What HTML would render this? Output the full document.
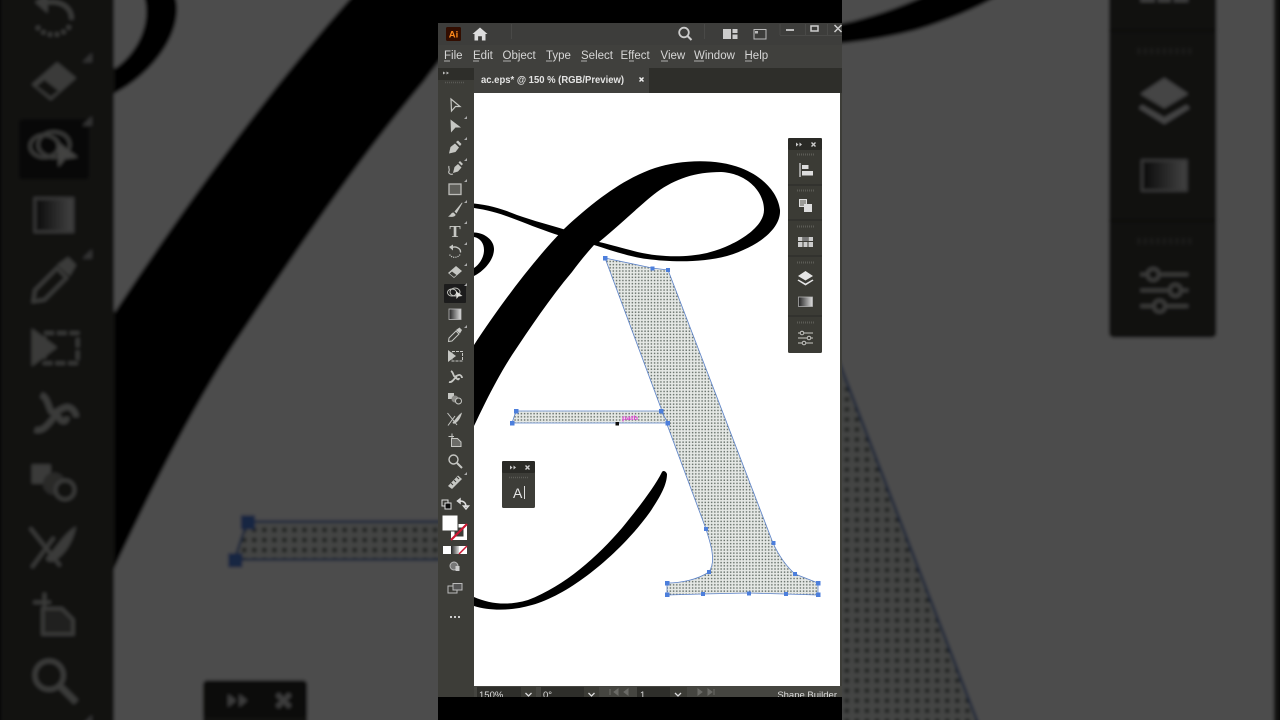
<!DOCTYPE html>
<html lang="en"><head><meta charset="utf-8"><title>Illustrator Shape Builder</title>
<style>html,body{margin:0;padding:0;background:#000;width:1280px;height:720px;overflow:hidden}svg{display:block}text{font-family:"Liberation Sans",sans-serif}</style>
</head><body>
<svg xmlns="http://www.w3.org/2000/svg" width="1280" height="720" viewBox="0 0 1280 720" style="overflow:hidden">
<defs>
<pattern id="ht" x="0" y="0" width="3.17" height="3.17" patternUnits="userSpaceOnUse">
<rect width="3.17" height="3.17" fill="#e6e9e6"/><rect x=".8" y=".8" width="1.5" height="1.5" fill="#6d7670"/>
</pattern>
<linearGradient id="g1"><stop offset="0" stop-color="#222"/><stop offset="1" stop-color="#ddd"/></linearGradient>
<filter id="bl" x="-5%" y="-5%" width="110%" height="110%"><feGaussianBlur stdDeviation="1.5"/></filter>
<filter id="sf" x="0" y="0" width="100%" height="100%"><feGaussianBlur stdDeviation=".35"/></filter>
<clipPath id="frameclip"><rect x="438" y="0" width="404" height="720"/></clipPath>
<clipPath id="pageclip"><rect x="0" y="0" width="1280" height="720"/></clipPath>
<g id="app">
<rect x="438" y="0" width="404" height="720" fill="#000"/>
<!-- chrome -->
<rect x="438" y="23" width="404" height="22" fill="#3e3e3a"/>
<rect x="438" y="45" width="404" height="23" fill="#41413d"/>
<rect x="438" y="68" width="404" height="25" fill="#2d2d29"/>
<rect x="438" y="80" width="36" height="620" fill="#3c3c38"/>
<rect x="438" y="68" width="35" height="12" fill="#2d2d29"/>
<rect x="474" y="68" width="175" height="25" fill="#40403c"/>
<rect x="474" y="93" width="366" height="593" fill="#fff"/>
<rect x="840" y="93" width="2" height="607" fill="#3c3c38"/>
<rect x="474" y="686" width="368" height="14" fill="#45453f"/>
<!-- title bar -->
<rect x="446" y="27" width="15" height="14" rx="1.5" fill="#330a00"/>
<text x="453.5" y="37.5" font-size="9.5" font-weight="700" text-anchor="middle" fill="#ff8a1a">Ai</text>
<path d="M480 27.5l7.5 6.5h-2v6.5h-3.6v-4.2h-3.8v4.2h-3.6V34h-2z" fill="#ddd"/>
<circle cx="684" cy="32.5" r="4.8" fill="none" stroke="#ccc" stroke-width="1.8"/><path d="M687.5 36l4 4" stroke="#ccc" stroke-width="2"/>
<path d="M723 29h8v10h-8zM732.5 29h5v4h-5zM732.5 34.500h5V39h-5z" fill="#ccc"/>
<rect x="754" y="29.500" width="12" height="9.500" fill="none" stroke="#bbb"/><rect x="755" y="31" width="3" height="2.500" fill="#bbb"/>
<rect x="786" y="29" width="8" height="2" fill="#bbb"/>
<rect x="811" y="26" width="7" height="5" fill="none" stroke="#ccc" stroke-width="1.500"/>
<path d="M834.500 25l7 7M841.500 25l-7 7" stroke="#ccc" stroke-width="1.500"/>
<path d="M511.500 24v15M704.500 24v15M780 35.500h62M780 24v11M805.500 24v11M827.500 24v11" stroke="#4a4a46" stroke-width="1"/>
<!-- menu -->
<g font-size="11.500" fill="#d6d6d6">
<text x="444" y="59">File</text><text x="473" y="59">Edit</text><text x="502.500" y="59">Object</text><text x="546" y="59">Type</text><text x="581" y="59">Select</text><text x="620.500" y="59">Effect</text><text x="660.500" y="59">View</text><text x="694" y="59">Window</text><text x="744.500" y="59">Help</text>
</g>
<path d="M444 61h6M473 61h6M503 61h8M546 61h6M581 61h6M629 61h5M661 61h7M694 61h10M745 61h7" stroke="#d6d6d6" stroke-width=".8"/>
<!-- tab -->
<text x="481" y="83" font-size="10.500" font-weight="700" fill="#e4e4e4" textLength="143" lengthAdjust="spacingAndGlyphs">ac.eps* @ 150 % (RGB/Preview)</text>
<path d="M639.500 77.500l4 4M643.500 77.500l-4 4" stroke="#eee" stroke-width="1.500"/>
<path d="M443 71.500l2.500 1.500-2.500 1.500zM446.500 71.500l2.500 1.500-2.500 1.500z" fill="#bbb"/>
<path d="M445 82.500h20" stroke="#5a5a55" stroke-width="1.500" stroke-dasharray="1 1"/>
<!-- artwork -->
<g fill="#000">
<path d="M474 345C497 310 530 264 564 229C595 200 625 178 655 168C680 160 715 158 741 168C762 176 778 192 780 210C781 228 760 246 727 256C700 263 670 262 647 259C630 257 610 250 594 245C585 255 578 264 572 272C550 298 530 328 512 355C497 378 484 405 474 426Z"/>
<path d="M599 242C620 225 640 205 657 192C675 179 695 172 721 172C745 173 764 190 764 210C764 228 735 246 707 253C680 259 650 256 630 250C618 247 608 244 599 242Z" fill="#fff"/>
<path d="M474 203.500C490 205 505 210 517 215C534 221 550 225 566 230L561 236C545 231 530 225 517 220C502 214 488 210 474 208Z"/>
<path d="M474 232.500C486 233 494 241 494 249C494 260 484 271 474 276V268C480 264 484 257 484 250C484 243 480 238 474 237Z"/>
<path d="M474 606C490 611 512 611 532 605C572 594 622 551 650 512C660 497 667 485 667 474C666 471 663 470 662 472C655 486 640 506 622 528C598 556 565 586 528 600C508 606 490 604 474 597Z"/>
</g>
<!-- selected A -->
<g fill="url(#ht)" stroke="#5b82c8" stroke-width=".8" stroke-linejoin="round">
<path d="M605 258L652 268L668 270L773 543C779 556 786 566 795 574L818 583V595L785 594L748 593L703 594L667 595V583C680 583 697 580 709 572C713 566 713 558 712 552C711 544 708 536 706 529Z"/>
<path d="M516 411H661L668 423H512Z"/>
</g>
<g fill="#4d7fdc">
<rect x="603" y="256" width="4.500" height="4.500"/><rect x="650.500" y="266.500" width="4" height="4"/><rect x="666" y="268" width="4" height="4"/><rect x="704" y="527" width="4" height="4"/><rect x="771.500" y="541" width="4" height="4"/><rect x="793" y="572" width="4" height="4"/><rect x="816" y="581" width="4.500" height="4.500"/><rect x="816" y="592.500" width="4.500" height="4.500"/><rect x="784" y="592" width="4" height="4"/><rect x="747" y="591.500" width="4" height="4"/><rect x="701" y="592" width="4" height="4"/><rect x="665" y="592.500" width="4.500" height="4.500"/><rect x="665" y="581" width="4.500" height="4.500"/><rect x="707" y="570" width="4" height="4"/>
<rect x="514" y="409" width="4.500" height="4.500"/><rect x="659" y="409" width="4.500" height="4.500"/><rect x="665.500" y="421" width="4.500" height="4.500"/><rect x="510" y="421" width="4.500" height="4.500"/>
</g>
<text x="622" y="420" font-size="6" font-weight="700" fill="#e23fd6" textLength="16" lengthAdjust="spacingAndGlyphs">path</text>
<rect x="615.500" y="422" width="3.500" height="3.500" fill="#111"/>
<!-- tools -->
<rect x="444" y="284" width="22" height="19" rx="1" fill="#1d1d1a"/>
<g fill="#c6c7c3" stroke="none">
<g transform="translate(455 105)"><path d="M-4 -6L5 1.500L.5 1.500L-3.500 6Z" fill="#3c3c38" stroke="#c6c7c3" stroke-width="1.200"/></g>
<g transform="translate(455 126)"><path d="M-4.500 -6.500L6 1.500L.5 1.500L-4 6.500Z"/></g>
<g transform="translate(455 147)"><path d="M-6 6.500L-4.500 0L0 -3.500L4 .5L.5 5ZM1 -5L3 -6.500L6.500 -3L5 -1Z"/></g>
<g transform="translate(455 168)"><path d="M-2 5L-.5 -1L3 -4L6.500 -.5L3 3.500ZM3.500 -5.500L5 -7L8 -4L6.500 -2.500Z"/><path d="M-2 6C-5 7 -7 5 -6 3C-5 1 -7 0 -6 -2" fill="none" stroke="#c6c7c3" stroke-width="1.100"/></g>
<g transform="translate(455 189)"><rect x="-6" y="-5" width="12" height="10.500" fill="#5e5e5a" stroke="#bdbdb9" stroke-width="1.300"/></g>
<g transform="translate(455 210)"><path d="M7 -7.500L-.5 1.500L1.500 3.500L7.500 -7ZM-1.500 2.500C-4 2.500 -4 5 -7 6.500C-3 7.500 1 6.500 .5 4.500Z"/></g>
<text x="455" y="237" font-size="17" font-weight="700" text-anchor="middle" style="font-family:'Liberation Serif',serif">T</text>
<g transform="translate(455 252)" fill="none" stroke="#c6c7c3"><path d="M-4 -4C0 -6.500 6 -4 5.500 .5" stroke-width="1.300"/><path d="M5 2.500C3 6 -3 6.500 -5.500 2.500" stroke-width="1.200" stroke-dasharray="1.200 1"/><path d="M-6 -5L-2 -7.500L-2 -1.500Z" fill="#c6c7c3" stroke="none"/></g>
<g transform="translate(455 272)"><path d="M-7 1L1 -6L7 -1L-1 6Z"/><path d="M-5.500 1.500L-3 -.5L1.500 3L-1 5Z" fill="#3c3c38"/></g>
<g transform="translate(455 293)" fill="none" stroke="#c6c7c3" stroke-width=".9"><ellipse cx="-3" cy="-.5" rx="4.500" ry="3.500"/><ellipse cx="0" cy="-1" rx="5" ry="4"/><path d="M1 -2L7.500 3L3.500 3.500L1.500 6Z" fill="#dfdfdb" stroke="none"/></g>
<g transform="translate(455 314)"><rect x="-6" y="-5" width="12" height="10.500" fill="url(#g1)" stroke="#bbb" stroke-width=".8"/></g>
<g transform="translate(455 335)"><path d="M-6.500 6.500L-6 3L1 -4L4 -1L-3 6Z" fill="#3c3c38" stroke="#c6c7c3" stroke-width="1"/><path d="M1 -5L4.500 -7.500L7 -5L5 -1.500Z"/></g>
<g transform="translate(455 356)"><path d="M-7 -6L1 0L-7 6Z"/><rect x="-3" y="-4.500" width="10.500" height="9.500" fill="none" stroke="#c6c7c3" stroke-dasharray="3 1"/></g>
<g transform="translate(455 377)" fill="none" stroke="#c6c7c3" stroke-width="1.800"><path d="M-4 -6C-2 -5 -2 -3 -1 -1C0 1 3 -3 5 -2C7 -1 7 1 7 1M-6 5C-3 6 -1 2 1 0C2 3 4 3 4 1"/></g>
<g transform="translate(455 398)"><rect x="-7" y="-5" width="6" height="6"/><circle cx="0" cy="1" r="3.500" fill="#8c8c88"/><circle cx="3.500" cy="3" r="3" fill="#3c3c38" stroke="#c6c7c3" stroke-width="1"/></g>
<g transform="translate(455 419)"><path d="M-7.500 -6L2 6M-7 6.500L0 -3" stroke="#c6c7c3" stroke-width="1" fill="none"/><path d="M7 -6.500C6 -2 4 2 0 4.500C-2 5 -3 4 -2 3C1 0 3 -4 7 -6.500Z"/></g>
<g transform="translate(455 440)"><path d="M-3 -6.500V-2M-6.500 -3.500H-1" stroke="#c6c7c3" fill="none"/><path d="M-3.500 -1.500H2.500L6 2V6.500H-3.500Z" fill="#6c6c68" stroke="#c6c7c3" stroke-width="1"/></g>
<g transform="translate(455 461)"><circle cx="-1.500" cy="-1.500" r="4.500" fill="none" stroke="#c6c7c3" stroke-width="1.400"/><path d="M2 2L7 7" stroke="#c6c7c3" stroke-width="2"/></g>
<g transform="translate(455 482)"><path d="M-7 4L3 -6.500L7 -3L-3 7Z"/><path d="M-4 1L-2 3M-1 -2L1 0M2 -5L4 -3" stroke="#3c3c38"/></g>
<!-- corner markers -->
<path d="M467 116v3h-3zM467 137v3h-3zM467 158v3h-3zM467 179v3h-3zM467 200v3h-3zM467 221v3h-3zM467 242v3h-3zM467 263v3h-3zM467 283v3h-3zM467 325v3h-3zM467 472v3h-3z" fill="#aaa"/>
</g>
<!-- colour controls -->
<rect x="442" y="500" width="6" height="6" fill="#3c3c38" stroke="#ddd"/><rect x="445" y="503" width="6" height="6" fill="#111" stroke="#ddd"/>
<path d="M460 501c4 0 6 2 6 6M466 509l-2.500-3h5zM460 499v4l-2.500-2z" fill="none" stroke="#ddd" stroke-width="1.500"/>
<rect x="451" y="524" width="16" height="16" fill="#fff"/><rect x="454.500" y="527.500" width="9" height="9" fill="#3c3c38"/>
<path d="M451 540L467 524" stroke="#cc1530" stroke-width="2.200"/>
<rect x="442" y="515" width="16" height="16" fill="#fff" stroke="#3c3c38"/>
<rect x="443" y="546" width="8" height="8" fill="#fff"/><rect x="451" y="546" width="8" height="8" fill="url(#g1)"/><rect x="459" y="546" width="8" height="8" fill="#fff"/><path d="M459 554L467 546" stroke="#cc1530" stroke-width="1.500"/>
<circle cx="454" cy="566" r="4" fill="#777" stroke="#bbb"/><rect x="455.500" y="566" width="4" height="5" fill="#ccc"/>
<rect x="448" y="586" width="9" height="7" fill="none" stroke="#bbb"/><rect x="453" y="583.500" width="9" height="6.500" fill="#555" stroke="#bbb"/>
<path d="M450 617h2M454 617h2M458 617h2" stroke="#ccc" stroke-width="2"/>
<!-- right panel -->
<rect x="788" y="138" width="34" height="215" rx="1.500" fill="#3a3a36"/>
<rect x="788" y="138" width="34" height="12" rx="1.500" fill="#2b2b27"/>
<path d="M796 142.500l2.500 2-2.500 2zM799.500 142.500l2.500 2-2.500 2z" fill="#ccc"/>
<path d="M811.500 142.500l4 4M815.500 142.500l-4 4" stroke="#ccc" stroke-width="1.400"/>
<path d="M788 185h34M788 220h34M788 256h34M788 316h34" stroke="#2a2a26"/>
<path d="M797 154.500h17M797 190.500h17M797 226.500h17M797 262.500h17M797 322.500h17" stroke="#5c5c57" stroke-width="2" stroke-dasharray="1 1"/>
<path d="M800 163v14" stroke="#ddd" stroke-width="1.200"/><rect x="802" y="165" width="6.500" height="4" fill="#ddd"/><rect x="802" y="171" width="11" height="4.500" fill="#ddd"/>
<rect x="799.500" y="199.500" width="7" height="7" fill="#9a9a96" stroke="#ddd"/><rect x="804" y="204" width="8" height="8" fill="#ddd"/>
<rect x="798" y="237" width="15" height="10" fill="#ccc"/><path d="M798 241.500h15M803 237v10M808 237v10" stroke="#3a3a36"/><rect x="803" y="237" width="5" height="4" fill="#777"/>
<path d="M805.500 271L813 276L805.500 280.500L798 276ZM798.500 279.500L805.500 283.500L812.500 279.500L813.500 280.500L805.500 285.500L797.500 280.500Z" fill="#e6e6e6"/>
<rect x="798.500" y="297" width="14" height="9.500" fill="url(#g1)" stroke="#bbb" stroke-width=".7"/>
<g fill="none" stroke="#c8c8c4" stroke-width="1"><path d="M798 333h15M798 338h15M798 343h15"/><circle cx="802" cy="333" r="1.800" fill="#3a3a36"/><circle cx="809" cy="338" r="1.800" fill="#3a3a36"/><circle cx="804" cy="343" r="1.800" fill="#3a3a36"/></g>
<!-- character panel -->
<rect x="502" y="461" width="33" height="47" rx="1.500" fill="#3c3c38"/>
<rect x="502" y="461" width="33" height="12" rx="1.500" fill="#2b2b27"/>
<path d="M510 465.500l2.500 2-2.500 2zM513.500 465.500l2.500 2-2.500 2z" fill="#ccc"/>
<path d="M525.500 465.500l4 4M529.500 465.500l-4 4" stroke="#ccc" stroke-width="1.400"/>
<path d="M509 477.500h19" stroke="#5c5c57" stroke-width="1.500" stroke-dasharray="1 1"/>
<text x="513" y="498" font-size="14" fill="#e6e6e6">A</text><path d="M524.500 486v13" stroke="#ddd"/>
<!-- status bar -->
<rect x="477" y="687" width="44" height="13" fill="#2f2f2b"/><rect x="521" y="687" width="15" height="13" fill="#3a3a36"/>
<rect x="541" y="687" width="43" height="13" fill="#2f2f2b"/><rect x="584" y="687" width="15" height="13" fill="#3a3a36"/>
<rect x="637" y="687" width="33" height="13" fill="#2f2f2b"/><rect x="670" y="687" width="17" height="13" fill="#3a3a36"/>
<text x="479" y="698" font-size="9.500" fill="#ddd">150%</text><text x="543" y="698" font-size="9.500" fill="#ddd">0°</text><text x="640" y="698" font-size="9.500" fill="#ddd">1</text>
<path d="M525.500 693l3 3 3-3M588.500 693l3 3 3-3M675 693l3 3 3-3" fill="none" stroke="#ddd" stroke-width="1.300"/>
<path d="M610 689v6M618 689l-4 3 4 3zM628 689l-4 3 4 3zM698 689l4 3-4 3zM708 689l4 3-4 3zM714 689v6" fill="#6a6a66" stroke="#6a6a66"/>
<text x="837" y="698" font-size="9.500" fill="#ddd" text-anchor="end">Shape Builder</text>
<!-- bars -->
<rect x="438" y="0" width="404" height="23" fill="#000"/>
<rect x="438" y="697" width="404" height="23" fill="#000"/>
</g>
</defs>
<!-- blurred background -->
<g clip-path="url(#pageclip)"><g filter="url(#bl)"><g transform="translate(640 360) scale(3.168) translate(-640 -360)"><use href="#app"/></g></g></g>
<rect width="1280" height="720" fill="#000" opacity=".7"/>
<!-- foreground -->
<g clip-path="url(#frameclip)"><g filter="url(#sf)"><use href="#app"/></g></g>
</svg>
</body></html>
